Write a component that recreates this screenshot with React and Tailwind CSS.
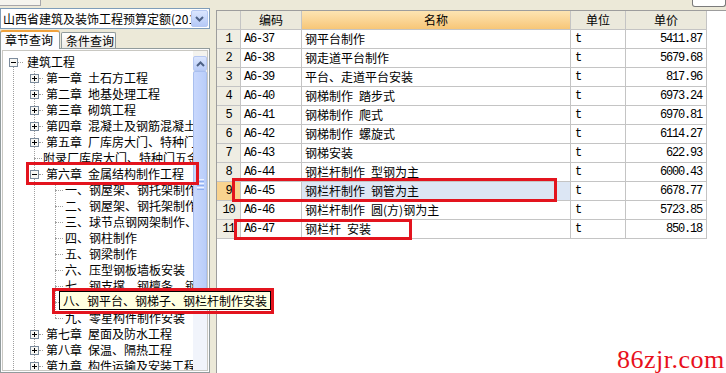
import React from 'react';

const tree = [
  { lv: 0, box: 'minus', text: ['建筑工程'] },
  { lv: 1, box: 'plus', text: ['第一章', '土石方工程'] },
  { lv: 1, box: 'plus', text: ['第二章', '地基处理工程'] },
  { lv: 1, box: 'plus', text: ['第三章', '砌筑工程'] },
  { lv: 1, box: 'plus', text: ['第四章', '混凝土及钢筋混凝土工程'] },
  { lv: 1, box: 'plus', text: ['第五章', '厂库房大门、特种门、木结构工程'] },
  { lv: 1, text: ['附录厂库房大门、特种门五金'] },
  { lv: 1, box: 'minus', text: ['第六章', '金属结构制作工程'] },
  { lv: 2, text: ['一、钢屋架、钢托架制作'] },
  { lv: 2, text: ['二、钢屋架、钢托架制作'] },
  { lv: 2, text: ['三、球节点钢网架制作、安装'] },
  { lv: 2, text: ['四、钢柱制作'] },
  { lv: 2, text: ['五、钢梁制作'] },
  { lv: 2, text: ['六、压型钢板墙板安装'] },
  { lv: 2, text: ['七、钢支撑、钢檩条、钢墙架制作'] },
  { lv: 2, text: ['八、钢平台、钢梯子、钢栏杆制作安装'] },
  { lv: 2, text: ['九、零星构件制作安装'] },
  { lv: 1, box: 'plus', text: ['第七章', '屋面及防水工程'] },
  { lv: 1, box: 'plus', text: ['第八章', '保温、隔热工程'] },
  { lv: 1, box: 'plus', text: ['第九章', '构件运输及安装工程'] },
];

const rows = [
  ['A6-37', '钢平台制作', '5411.87'],
  ['A6-38', '钢走道平台制作', '5679.68'],
  ['A6-39', '平台、走道平台安装', '817.96'],
  ['A6-40', '钢梯制作 踏步式', '6973.24'],
  ['A6-41', '钢梯制作 爬式', '6970.81'],
  ['A6-42', '钢梯制作 螺旋式', '6114.27'],
  ['A6-43', '钢梯安装', '622.93'],
  ['A6-44', '钢栏杆制作 型钢为主', '6000.43'],
  ['A6-45', '钢栏杆制作 钢管为主', '6678.77'],
  ['A6-46', '钢栏杆制作 圆(方)钢为主', '5723.85'],
  ['A6-47', '钢栏杆 安装', '850.18'],
];

const Expander = ({ open }) => (
  <svg width="9" height="9" className="shrink-0 relative z-[1]">
    <rect x="0.5" y="0.5" width="8" height="8" fill="#f7f7f4" stroke="#7b8b9c" />
    <path d="M2 4.5h5" stroke="#000" />
    {!open && <path d="M4.5 2v5" stroke="#000" />}
  </svg>
);

// two-part labels keep the half-width gap of the original font
const Label = ({ parts }) => (
  <span className="whitespace-nowrap">
    {parts.map((p, i) => (
      <span key={i} className={i > 0 ? 'ml-[6px]' : ''}>{p}</span>
    ))}
  </span>
);

const TreeRow = ({ item }) => {
  if (item.lv === 0) {
    return (
      <div className="h-[16px] flex items-center pl-[6px] whitespace-nowrap">
        <Expander open />
        <span className="w-[5px] shrink-0 border-t border-dotted border-[#a0a0a0]" />
        <span className="ml-[4px]"><Label parts={item.text} /></span>
      </div>
    );
  }
  if (item.lv === 1 && item.box) {
    return (
      <div className="h-[16px] flex items-center pl-[27px] whitespace-nowrap">
        <Expander open={item.box === 'minus'} />
        <span className="w-[4px] shrink-0 border-t border-dotted border-[#a0a0a0]" />
        <span className="ml-[3px]"><Label parts={item.text} /></span>
      </div>
    );
  }
  if (item.lv === 1) {
    return (
      <div className="h-[16px] flex items-center pl-[31px] whitespace-nowrap">
        <span className="w-[8px] shrink-0 border-t border-dotted border-[#a0a0a0]" />
        <span className="ml-[1px]"><Label parts={item.text} /></span>
      </div>
    );
  }
  return (
    <div className="h-[16px] flex items-center pl-[52px] whitespace-nowrap">
      <span className="w-[8px] shrink-0 border-t border-dotted border-[#a0a0a0]" />
      <span className="ml-[2px]"><Label parts={item.text} /></span>
    </div>
  );
};

const Chevron = ({ up }) => (
  <svg width="9" height="6" viewBox="0 0 9 6">
    <path d={up ? 'M1 5 L4.5 1.5 L8 5' : 'M1 1 L4.5 4.5 L8 1'} fill="none" stroke="#4d6185" strokeWidth="2" />
  </svg>
);

function LeftPane() {
  return (
    <div className="w-[211px] shrink-0 flex flex-col">
      <div className="h-[8px] flex">
        <div className="w-[41px] h-[6px] border-r border-b border-[#a7a6aa] bg-[#f5f4ee]" />
      </div>

      {/* combobox */}
      <div className="h-[21px] w-[210px] border border-[#7f9db9] bg-white flex items-center">
        <div className="flex-1 min-w-0 overflow-hidden whitespace-nowrap pl-[2px] leading-[19px]">山西省建筑及装饰工程预算定额(2011)</div>
        <div className="w-[17px] h-[17px] shrink-0 mr-[1px] rounded-[2px] border border-[#b6c8f2] bg-gradient-to-b from-[#dbe6fe] to-[#b5c9f7] flex items-center justify-center">
          <Chevron />
        </div>
      </div>

      {/* tabs */}
      <div className="mt-[1px] h-[18px] flex items-end relative z-10">
        <div className="w-[60px] h-[19px] -mb-[1px] bg-[#fcfcfe] border-l border-r border-[#919b9c] border-t-[2px] border-t-[#f0a23c] rounded-t-[3px] pl-[4px] leading-[16px]">章节查询</div>
        <div className="ml-[1px] w-[55px] h-[16px] border border-b-0 border-[#919b9c] rounded-t-[2px] bg-gradient-to-b from-white to-[#ecebe5] pl-[4px] leading-[15px]">条件查询</div>
      </div>

      {/* tab page */}
      <div className="flex-1 w-[210px] border border-[#919b9c] bg-[#fcfcfe] p-[1px] flex min-h-0">
        <div className="flex-1 min-w-0 border border-[#c9c8c2] bg-white flex min-h-0">
          <div className="relative flex-1 min-w-0 overflow-hidden pt-[3px]">
            <div className="absolute left-[10px] top-[16px] bottom-0 border-l border-dotted border-[#a0a0a0]" />
            <div className="absolute left-[31px] top-[20px] bottom-0 border-l border-dotted border-[#a0a0a0]" />
            <div className="absolute left-[52px] top-[131px] h-[136px] border-l border-dotted border-[#a0a0a0]" />
            <div className="relative">
              {tree.map((item, i) => <TreeRow key={i} item={item} />)}
            </div>
          </div>
          {/* scrollbar */}
          <div className="w-[14px] shrink-0 flex flex-col pt-[5px] bg-[#f4f3ee]">
            <div className="h-[15px] rounded-[2px] border border-[#b6c8f2] bg-gradient-to-b from-[#dbe6fe] to-[#b9ccf8] flex items-center justify-center">
              <Chevron up />
            </div>
            <div className="h-[226px] rounded-[2px] border border-[#a9bfee] bg-gradient-to-r from-[#c9d8fd] to-[#b9cdf9] flex flex-col items-center justify-center gap-[1px]">
              <div className="w-[7px] h-[1px] bg-[#eef3ff]" />
              <div className="w-[7px] h-[1px] bg-[#8eaef0]" />
              <div className="w-[7px] h-[1px] bg-[#eef3ff]" />
              <div className="w-[7px] h-[1px] bg-[#8eaef0]" />
              <div className="w-[7px] h-[1px] bg-[#eef3ff]" />
              <div className="w-[7px] h-[1px] bg-[#8eaef0]" />
            </div>
            <div className="flex-1 bg-[#f1f4fb]" />
          </div>
        </div>
      </div>
    </div>
  );
}

const cell = 'border-r border-b border-[#c4c4c4] h-[19px] leading-[18px] overflow-hidden whitespace-nowrap';
const mono = "font-['Liberation_Mono',monospace] tracking-[-1.2px]";

function RightPane() {
  return (
    <div className="flex-1 min-w-0 flex flex-col">
      <div className="h-[10px] flex justify-end">
        <div className="w-[34px] h-[7px] border border-t-0 border-[#7b7b7b] rounded-b-[3px] bg-white" />
      </div>
      <div className="flex-1 ml-[5px] border-l border-t border-[#9d9d9d] bg-white">
        <div className="grid grid-cols-[24px_61px_269px_55px_81px] w-max">
          <div className={`${cell} bg-[#ebe9dc]`} />
          <div className={`${cell} bg-[#ebe9dc] text-center`}>编码</div>
          <div className={`${cell} bg-gradient-to-b from-[#fde4b2] to-[#f7c677] text-center`}>名称</div>
          <div className={`${cell} bg-[#ebe9dc] text-center`}>单位</div>
          <div className={`${cell} bg-[#ebe9dc] text-center`}>单价</div>

          {rows.map(([code, name, price], i) => {
            const sel = i === 8;
            return (
              <React.Fragment key={code}>
                <div className={`${cell} ${mono} text-center ${sel ? 'bg-[#f9d38f]' : 'bg-[#efede3]'}`}>{i + 1}</div>
                <div className={`${cell} ${mono} pl-[3px]`}>{code}</div>
                <div className={`${cell} pl-[3px] ${sel ? 'bg-[#dce6f4]' : ''}`}><Label parts={name.split(' ')} /></div>
                <div className={`${cell} ${mono} pl-[4px]`}>t</div>
                <div className={`${cell} ${mono} text-right pr-[4px]`}>{price}</div>
              </React.Fragment>
            );
          })}
        </div>
      </div>
    </div>
  );
}

export default function App() {
  return (
    <div className="relative w-[726px] h-[373px] overflow-hidden bg-[#ece9d8] flex font-['Noto_Sans_CJK_SC',sans-serif] text-[12px] text-black">
      <LeftPane />
      <RightPane />

      {/* tooltip over the tree */}
      <div className="absolute left-[59px] top-[291px] w-[212px] h-[19px] bg-[#ffffe1] border border-black pl-[3px] leading-[17px] whitespace-nowrap">八、钢平台、钢梯子、钢栏杆制作安装</div>

      {/* red annotation boxes */}
      <div className="absolute left-[26px] top-[162px] w-[173px] h-[23px] border-[3px] border-[#e3141e]" />
      <div className="absolute left-[52px] top-[288px] w-[222px] h-[26px] border-[3px] border-[#e3141e]" />
      <div className="absolute left-[232px] top-[178px] w-[325px] h-[24px] border-[3px] border-[#e3141e]" />
      <div className="absolute left-[234px] top-[219px] w-[178px] h-[21px] border-[3px] border-[#e3141e]" />

      <div className="absolute left-[617px] top-[347px] text-[26px] leading-[26px] tracking-[0.5px] text-[#e8101c] font-['Liberation_Serif',serif]">86zjr.com</div>
    </div>
  );
}
